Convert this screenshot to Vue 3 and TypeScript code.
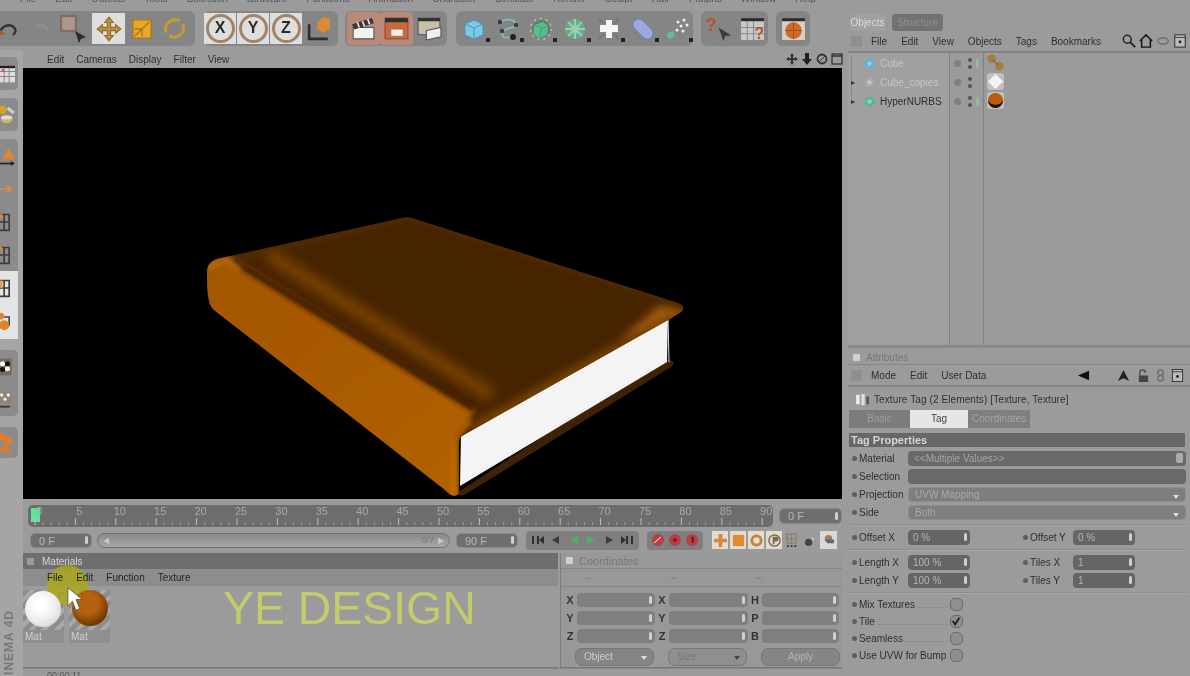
<script setup lang="ts">
const topMenu = ['File', 'Edit', 'Objects', 'Tools', 'Selection', 'Structure', 'Functions', 'Animation', 'Character', 'Simulate', 'Render', 'Sculpt', 'Hair', 'Plugins', 'Window', 'Help'];

const frames = Array.from({ length: 91 }, (_, i) => i);
const frameX = (f: number) => 7 + f * 8.08;

const objects = [
  { name: 'Cube', color: '#5fb4d2', expander: false, dim: true, tick: true },
  { name: 'Cube_copies', color: '#a3a9b0', expander: true, dim: true, tick: false },
  { name: 'HyperNURBS', color: '#58b59a', expander: true, dim: false, tick: true },
];

const coordRows = [
  ['X', 'X', 'H'],
  ['Y', 'Y', 'P'],
  ['Z', 'Z', 'B'],
];

const checks = [
  { label: 'Mix Textures', on: false },
  { label: 'Tile', on: true },
  { label: 'Seamless', on: false },
  { label: 'Use UVW for Bump', on: false },
];
</script>

<template>
  <div class="app">
    <div class="top-menu">
      <span v-for="m in topMenu" :key="m">{{ m }}</span>
    </div>

    <div class="body">
      <div class="left">
        <div class="toolbar">
          <div class="group g1">
            <svg class="ic undo" viewBox="0 0 24 24"><path d="M2 15c2-6 8-8 12-6s5 6 1 9" fill="none" stroke="#333" stroke-width="2.4" /><path d="M1 12l6 5-7 2z" fill="#b5562b" /></svg>
            <svg class="ic redo" viewBox="0 0 24 24"><path d="M20 15c-2-6-8-8-12-6" fill="none" stroke="#8f8f8f" stroke-width="2.4" /></svg>
            <svg class="ic sel" viewBox="0 0 28 28"><rect x="1" y="1" width="15" height="15" fill="#a89a90" stroke="#8a6a5c" stroke-width="2.4" /><path d="M15 16l11 6-5 2-2 4z" fill="#2c2c2c" /></svg>
            <span class="btn on move">
              <svg class="ic" viewBox="0 0 24 24"><path d="M12 1l4 5h-2.500v4.500H18V8l5 4-5 4v-2.500h-4.500V18H16l-4 5-4-5h2.500v-4.500H6V16l-5-4 5-4v2.500h4.500V6H8z" fill="#b8913a" stroke="#8a7030" /></svg>
            </span>
            <svg class="ic scale" viewBox="0 0 24 24"><rect x="2" y="2" width="20" height="20" rx="2" fill="#e8a72b" stroke="#a9781c" stroke-width="1.500" /><path d="M4 20L20 4M4 12h8v8" fill="none" stroke="#a9781c" stroke-width="1.500" /></svg>
            <svg class="ic rotate" viewBox="0 0 24 24"><path d="M4 16a9 9 0 0 1 13-11M20 8a9 9 0 0 1-13 11" fill="none" stroke="#c89a36" stroke-width="3" /></svg>
          </div>
          <div class="group g2">
            <span v-for="a in ['X', 'Y', 'Z']" :key="a" class="btn on axis"><b>{{ a }}</b></span>
            <svg class="ic coord" viewBox="0 0 26 26"><path d="M3 9v14h18" fill="none" stroke="#2e2e2e" stroke-width="2.500" /><path d="M11 7l6-5 6 2v9l-6 4-6-3z" fill="#db8a35" /></svg>
          </div>
          <div class="group g3">
            <span class="btn clap active">
              <svg class="ic" viewBox="0 0 26 26"><path d="M3 12h20v11H3z" fill="#f2f2f2" stroke="#555" /><path d="M2 9l19-6 2 5-19 6z" fill="#3a3a3a" /><path d="M7 7l2 5M12 6l2 5M17 4l2 5" stroke="#eee" stroke-width="1.500" /></svg>
            </span>
            <span class="btn clap active">
              <svg class="ic" viewBox="0 0 26 26"><rect x="2" y="3" width="22" height="20" fill="#c96a3a" stroke="#7a5040" /><rect x="2" y="3" width="22" height="4" fill="#2f2f2f" /><path d="M8 14h11v6H8z" fill="#eee" /></svg>
            </span>
            <span class="btn clap">
              <svg class="ic" viewBox="0 0 26 26"><rect x="2" y="3" width="21" height="16" fill="#c9bfa8" stroke="#555" /><rect x="2" y="3" width="21" height="3" fill="#2f2f2f" /><path d="M10 15l14-3v9l-14 3z" fill="#eee" stroke="#555" /></svg>
            </span>
          </div>
          <div class="group g4">
            <span class="btn prim"><svg class="ic" viewBox="0 0 24 24"><path d="M3 7l9-4 9 4v11l-9 4-9-4z" fill="#7dcae6" stroke="#4a93b5" /><path d="M3 7l9 4 9-4M12 11v11" fill="none" stroke="#4a93b5" /></svg><i /></span>
            <span class="btn prim"><svg class="ic" viewBox="0 0 24 24"><path d="M4 5c6-4 14-3 16 2s-14 3-14 9 6 5 9 4" fill="none" stroke="#8db4bf" stroke-width="2" /><circle cx="4" cy="5" r="2.200" fill="#2f3e42" /><circle cx="20" cy="8" r="2.200" fill="#2f3e42" /><circle cx="6" cy="14" r="2.200" fill="#2f3e42" /><circle cx="17" cy="20" r="3" fill="#222" /></svg><i /></span>
            <span class="btn prim"><svg class="ic" viewBox="0 0 24 24"><circle cx="12" cy="12" r="10.500" fill="none" stroke="#c4c4b4" stroke-dasharray="2 4" stroke-width="1.500" /><circle cx="12" cy="12" r="9" fill="#5f7f6f" /><path d="M5 8l9-3 5 4-1 9-8 3-5-4z" fill="#55c08c" /><path d="M5 8l8 3 6-2M13 11l-3 10" fill="none" stroke="#3f9f70" /></svg><i /></span>
            <span class="btn prim"><svg class="ic" viewBox="0 0 24 24"><circle cx="12" cy="12" r="10" fill="#63ae88" /><circle cx="12" cy="12" r="4" fill="#a9c9b4" /><path d="M12 2v20M2 12h20M5 5l14 14M19 5L5 19" stroke="#9bcdb0" stroke-width="2" /></svg><i /></span>
            <span class="btn prim"><svg class="ic" viewBox="0 0 24 24"><path d="M9 3h6v5h6v7h-6v6H9v-6H3V8h6z" fill="#f4f4f4" /><path d="M2 2l5 5M22 2l-5 5M2 22l5-5M22 22l-5-5" stroke="#5d7f88" stroke-width="2" /></svg><i /></span>
            <span class="btn prim"><svg class="ic" viewBox="0 0 24 24"><rect x="0" y="6" width="24" height="12" rx="6" transform="rotate(45 12 12)" fill="#9aa8e0" stroke="#6a78a8" /></svg><i /></span>
            <span class="btn prim"><svg class="ic" viewBox="0 0 24 24"><path d="M2 16l6-2 2 5-5 3-3-2z" fill="#63bd96" /><g fill="#eee"><circle cx="13" cy="5" r="1.500" /><circle cx="19" cy="3" r="1.500" /><circle cx="16" cy="9" r="1.500" /><circle cx="22" cy="8" r="1.500" /><circle cx="12" cy="13" r="1.500" /><circle cx="18" cy="14" r="1.500" /></g></svg><i /></span>
          </div>
          <div class="group g5">
            <svg class="ic q" viewBox="0 0 28 28"><text x="0" y="17" class="help-mark">?</text><path d="M14 13l13 8-6 1-2 5z" fill="#3c3c3c" /></svg>
            <svg class="ic q" viewBox="0 0 26 26"><rect x="2" y="3" width="22" height="21" fill="#c9c9c9" /><rect x="2" y="3" width="22" height="3" fill="#2b2b2b" /><path d="M2 12h22M2 18h22M8 6v18M14 6v18" stroke="#8a8a8a" /><text x="15" y="23" class="help-mark small">?</text></svg>
          </div>
          <div class="group g6">
            <svg class="ic q" viewBox="0 0 26 26"><rect x="2" y="3" width="22" height="21" fill="#d5d0c8" /><rect x="2" y="3" width="22" height="3" fill="#2b2b2b" /><circle cx="13" cy="15" r="8" fill="#cf6a28" /><path d="M5 15h16M13 7v16" stroke="#a84e18" /></svg>
          </div>
        </div>

        <div class="work">
          <div class="strip">
            <div class="sgroup">
              <span class="sbtn"><svg class="ic" viewBox="0 0 24 24"><rect x="-6" y="2" width="24" height="20" fill="#ddd" /><rect x="-6" y="2" width="24" height="3" fill="#222" /><path d="M-6 9h24M-6 15h24M5 5v17M11 5v17" stroke="#777" /><rect x="2" y="6" width="3" height="3" fill="#d55" /></svg></span>
            </div>
            <div class="sgroup">
              <span class="sbtn"><svg class="ic" viewBox="0 0 24 24"><circle cx="3" cy="6" r="5" fill="#d8a11f" /><path d="M10 2l8 6-3 3-7-6z" fill="#ccc" /><ellipse cx="8" cy="17" rx="7" ry="5" fill="#c9b46a" /><ellipse cx="8" cy="15" rx="7" ry="2.500" fill="#ddd" /></svg></span>
            </div>
            <div class="sgroup long">
              <span class="sbtn"><svg class="ic" viewBox="0 0 24 24"><path d="M3 16L10 2l8 14z" fill="#e0872c" /><path d="M-2 21h17" stroke="#222" stroke-width="2" /><path d="M13 18l5 3-5 3z" fill="#222" /></svg></span>
              <span class="sbtn"><svg class="ic" viewBox="0 0 24 24"><path d="M-2 12h13M8 8l6 4-6 4" fill="none" stroke="#cc8f45" stroke-width="2.500" /></svg></span>
              <span class="sbtn"><svg class="ic" viewBox="0 0 24 24"><path d="M-2 3h13v19H-2zM-2 12h13M5 3v19" fill="none" stroke="#3c3c3c" stroke-width="2" /><circle cx="1" cy="5" r="2.500" fill="#da8a3a" /></svg></span>
              <span class="sbtn"><svg class="ic" viewBox="0 0 24 24"><path d="M-2 3h13v19H-2zM-2 12h13M5 3v19" fill="none" stroke="#3c3c3c" stroke-width="2" /><circle cx="1" cy="4" r="2" fill="#da8a3a" /></svg></span>
              <span class="sbtn lit"><svg class="ic" viewBox="0 0 24 24"><path d="M-2 3h13v19H-2zM-2 12h13M5 3v19" fill="none" stroke="#3c3c3c" stroke-width="2" /><rect x="-2" y="3" width="5" height="9" fill="#e29a4c" /></svg></span>
              <span class="sbtn lit"><svg class="ic" viewBox="0 0 24 24"><path d="M-2 6h13v10H-2z" fill="none" stroke="#444" stroke-width="2" /><circle cx="5" cy="16" r="6" fill="#e0842c" /><circle cx="1" cy="5" r="4" fill="#e0842c" /></svg></span>
            </div>
            <div class="sgroup after-long">
              <span class="sbtn"><svg class="ic" viewBox="0 0 24 24"><rect x="-2" y="2" width="16" height="20" fill="#7a6a58" /><g fill="#fff"><circle cx="3" cy="8" r="3" /><circle cx="9" cy="14" r="3" /></g><g fill="#111"><circle cx="9" cy="8" r="3" /><circle cx="3" cy="15" r="3" /></g></svg></span>
              <span class="sbtn"><svg class="ic" viewBox="0 0 24 24"><rect x="-2" y="2" width="16" height="14" fill="#938373" /><g fill="#eee"><circle cx="2" cy="6" r="2" /><circle cx="10" cy="6" r="2" /><circle cx="6" cy="11" r="2" /></g><path d="M-2 20h14" stroke="#333" stroke-width="2" /></svg></span>
            </div>
            <div class="sgroup after-long">
              <span class="sbtn tall"><svg class="ic" viewBox="0 0 24 30"><g fill="#d97f33"><circle cx="2" cy="8" r="5" /><circle cx="10" cy="12" r="5" /><path d="M6 14l8 12H-2z" /></g></svg></span>
            </div>
            <span class="brand">CINEMA 4D</span>
          </div>

          <div class="main">
            <div class="view-menu">
              <span>Edit</span><span>Cameras</span><span>Display</span><span>Filter</span><span>View</span>
              <div class="view-icons">
                <svg class="mini" viewBox="0 0 12 12"><path d="M6 0l2 3H7v2h2V4l3 2-3 2V7H7v2h1l-2 3-2-3h1V7H3v1L0 6l3-2v1h2V3H4z" fill="#333" /></svg>
                <svg class="mini" viewBox="0 0 12 12"><path d="M4 0h4v6h3l-5 6-5-6h3z" fill="#222" /></svg>
                <svg class="mini" viewBox="0 0 12 12"><circle cx="6" cy="6" r="4.500" fill="none" stroke="#333" stroke-width="1.800" /><path d="M3 9l6-6" stroke="#333" /></svg>
                <svg class="mini" viewBox="0 0 12 12"><rect x="1" y="1" width="10" height="10" fill="none" stroke="#333" stroke-width="1.300" /><path d="M1 3h10" stroke="#333" stroke-width="1.500" /></svg>
              </div>
            </div>

            <div class="viewport">
              <svg class="book" viewBox="23 68 819 431">
                <defs>
                  <filter id="edge" x="-20%" y="-20%" width="140%" height="140%"><feGaussianBlur stdDeviation="2.500" /></filter>
                  <filter id="soft" x="-20%" y="-20%" width="140%" height="140%"><feGaussianBlur stdDeviation="4" /></filter>
                  <filter id="softer" x="-20%" y="-20%" width="140%" height="140%"><feGaussianBlur stdDeviation="6" /></filter>
                  <clipPath id="bookClip"><path d="M207 272c0-8 6-13 14-14L402 218c4-1 8-1 13 1L678 303c6 2 7 6 3 9L668 320 462 436c-2 2-3 4-3 8V492c0 3-4 5-8 3-2-1-4-3-6-5L214 310c-5-5-7-12-7-38z" /></clipPath>
                  <linearGradient id="spine" x1="0" y1="0" x2="1" y2="1">
                    <stop offset="0" stop-color="#a35701" />
                    <stop offset="0.5" stop-color="#a85a00" />
                    <stop offset="1" stop-color="#b46200" />
                  </linearGradient>
                </defs>
                <path d="M662 358l10 3c3 2 1 4-1 6L466 494c-3 2-7 2-9-1z" fill="#3d2208" />
                <path d="M668 316L667 362 460 486 461 436z" fill="#f4f4f4" />
                <path d="M668 316l1 46" stroke="#d8d8d8" />
                <g clip-path="url(#bookClip)">
                  <rect x="190" y="200" width="510" height="305" fill="#472401" />
                  <path d="M660 305L690 312 660 330 620 340z" fill="#a05a0d" filter="url(#soft)" />
                  <path d="M676 316L470 430" stroke="#7d4506" stroke-width="9" fill="none" filter="url(#soft)" />
                  <path d="M240 258L410 217 680 304" stroke="#573004" stroke-width="3" fill="none" filter="url(#edge)" />
                  <path d="M268 254L492 396" stroke="#7a4305" stroke-width="13" fill="none" filter="url(#softer)" />
                  <path d="M198 262L232 256 476 410 456 436 460 502 436 500 196 322z" fill="url(#spine)" filter="url(#edge)" />
                  <path d="M232 260L474 409" stroke="#341900" stroke-width="6" fill="none" filter="url(#edge)" />
                  <path d="M207 268L225 259 240 270" stroke="#bb6a12" stroke-width="5" fill="none" filter="url(#edge)" />
                  <path d="M453 497L456 438 470 420" stroke="#c57207" stroke-width="4" fill="none" filter="url(#edge)" />
                </g>
              </svg>
            </div>

            <svg class="ruler" viewBox="0 0 745 22">
              <rect x="0" y="0" width="745" height="22" rx="5" fill="#6d6d6d" />
              <rect x="3" y="3" width="9" height="14" fill="#5fe39c" />
              <g v-for="f in frames" :key="f">
                <line :x1="frameX(f)" :x2="frameX(f)" :y1="f % 5 === 0 ? 13 : 17" y2="20" :stroke="f % 5 === 0 ? '#bdbdbd' : '#9d9d9d'" />
                <text v-if="f % 5 === 0" :x="frameX(f) + 4" y="10" text-anchor="middle" class="ruler-label">{{ f }}</text>
              </g>
            </svg>
            <div class="ruler-end"><span class="field end-field">0 F<i class="spin" /></span></div>

            <div class="playback">
              <span class="field frame-field">0 F<i class="spin" /></span>
              <div class="slider">
                <span class="slider-arrow">◀</span>
                <span class="slider-count">0/7</span>
                <span class="slider-arrow">▶</span>
              </div>
              <span class="field frame-field">90 F<i class="spin" /></span>
              <div class="pgroup transport">
                <svg viewBox="0 0 12 10"><path d="M0 1h2v8H0zM12 1v8L7 5v4H5V1h2v4z" fill="#2f2f2f" /></svg>
                <svg viewBox="0 0 12 10"><path d="M9 1v8L2 5z" fill="#3c3c3c" /></svg>
                <svg viewBox="0 0 12 10"><path d="M10 1v8L2 5z" fill="#49b45f" /></svg>
                <svg viewBox="0 0 12 10"><path d="M2 1v8l8-4z" fill="#49b45f" /></svg>
                <svg viewBox="0 0 12 10"><path d="M3 1v8l7-4z" fill="#3c3c3c" /></svg>
                <svg viewBox="0 0 12 10"><path d="M12 1h-2v8h2zM0 1v8l5-4v4h2V1H5v4z" fill="#2f2f2f" /></svg>
              </div>
              <div class="pgroup record">
                <svg viewBox="0 0 14 14"><circle cx="7" cy="7" r="6" fill="#b83f45" /><path d="M3 10l7-6" stroke="#eee" /></svg>
                <svg viewBox="0 0 14 14"><circle cx="7" cy="7" r="6" fill="#b83f45" /><circle cx="7" cy="7" r="2" fill="#7a2024" /></svg>
                <svg viewBox="0 0 14 14"><circle cx="7" cy="7" r="6" fill="#b83f45" /><path d="M6 4h3v6H7z" fill="#6f2024" /></svg>
              </div>
              <div class="keys">
                <span class="key"><svg viewBox="0 0 14 14"><path d="M5 0h4v5h5v4H9v5H5V9H0V5h5z" fill="#cc8a3a" /></svg></span>
                <span class="key"><svg viewBox="0 0 14 14"><rect x="1" y="1" width="12" height="12" fill="#e08a33" /></svg></span>
                <span class="key"><svg viewBox="0 0 14 14"><circle cx="7" cy="7" r="5" fill="none" stroke="#c18436" stroke-width="3" /></svg></span>
                <span class="key"><svg viewBox="0 0 14 14"><circle cx="7" cy="7" r="6" fill="none" stroke="#7a6a50" stroke-width="1.500" /><path d="M5 3h4a2 2 0 0 1 0 5H7v3H5z" fill="#7a6a50" /></svg></span>
                <svg class="plain" viewBox="0 0 14 16"><path d="M1 1h10v10H1zM1 6h10M6 1v10" fill="none" stroke="#8a7a60" stroke-dasharray="2 1" stroke-width="1.500" /><path d="M1 14h12" stroke="#333" stroke-dasharray="2 2" stroke-width="2" /></svg>
                <svg class="plain" viewBox="0 0 14 14"><circle cx="6" cy="9" r="4" fill="#444" /><path d="M8 2l5 4-3 2z" fill="#bbb" /></svg>
                <span class="key last"><svg viewBox="0 0 14 14"><circle cx="7" cy="5" r="4" fill="#9d8060" /><path d="M3 6h10v4H6z" fill="#666" /></svg></span>
              </div>
            </div>

            <div class="panels">
              <section class="materials">
                <div class="mat-title"><i class="sq" />Materials</div>
                <div class="mat-menu">
                  <span>File</span><span>Edit</span><span>Function</span><span>Texture</span>
                </div>
                <div class="mat-content">
                  <div class="mat">
                    <span class="ball white" />
                    <span class="mat-name">Mat</span>
                  </div>
                  <div class="mat">
                    <span class="ball brown" />
                    <span class="mat-name">Mat</span>
                  </div>
                  <span class="watermark">YE DESIGN</span>
                </div>
                <span class="cursor-halo" />
                <svg class="cursor" viewBox="0 0 20 28"><path d="M1 1v20l5-5 4 10 4-2-4-10h7z" fill="#fff" stroke="#444" stroke-width="0.800" /></svg>
              </section>

              <section class="coords">
                <div class="coord-title"><i class="sq light" />Coordinates</div>
                <div class="coord-menu"><span>–</span><span>–</span><span>–</span></div>
                <div class="coord-grid">
                  <template v-for="row in coordRows" :key="row[2]">
                    <template v-for="(label, i) in row" :key="label + i">
                      <b class="coord-label">{{ label }}</b>
                      <span class="cfield"><i class="spin" /></span>
                    </template>
                  </template>
                </div>
                <div class="coord-actions">
                  <span class="pill light">Object<i class="caret" /></span>
                  <span class="pill dim">Size<i class="caret dark" /></span>
                  <span class="pill apply">Apply</span>
                </div>
              </section>
            </div>
            <div class="status">00:00:11</div>
          </div>
        </div>
      </div>

      <aside class="right">
        <div class="tabs">
          <span class="tab-on">Objects</span><span class="tab-off">Structure</span>
        </div>
        <div class="r-menu">
          <i class="grip" />
          <span>File</span><span>Edit</span><span>View</span><span>Objects</span><span>Tags</span><span>Bookmarks</span>
          <div class="r-icons">
            <svg viewBox="0 0 16 16"><circle cx="6" cy="6" r="4.500" fill="none" stroke="#222" stroke-width="1.700" /><path d="M9 9l6 6" stroke="#222" stroke-width="2.200" /></svg>
            <svg viewBox="0 0 16 16"><path d="M1 8l7-7 7 7M3 7v8h10V7" fill="none" stroke="#111" stroke-width="1.700" /></svg>
            <svg viewBox="0 0 16 16"><ellipse cx="8" cy="8" rx="6" ry="3.500" fill="none" stroke="#666" stroke-width="1.300" /></svg>
            <svg viewBox="0 0 16 16"><rect x="2" y="1" width="12" height="14" fill="#bbb" stroke="#333" stroke-width="1.200" /><path d="M2 4h12" stroke="#333" /><circle cx="8" cy="9" r="1.600" fill="#222" /></svg>
          </div>
        </div>
        <div class="tree">
          <div class="tree-names">
            <div v-for="o in objects" :key="o.name" class="tree-row">
              <span class="expander" :class="{ blank: !o.expander }">▸</span>
              <svg class="obj-ic" viewBox="0 0 12 12"><circle cx="6" cy="6" r="5.500" :fill="o.color" /><path d="M3 6l3-3 3 3-3 3z" fill="#dbe8e8" opacity="0.500" /></svg>
              <span class="obj-name" :class="{ dim: o.dim }">{{ o.name }}</span>
            </div>
          </div>
          <div class="tree-flags">
            <div v-for="o in objects" :key="o.name" class="flag-row">
              <i class="flag-dot" />
              <span class="flag-pair"><i /><i /></span>
              <em v-if="o.tick" class="flag-tick" />
            </div>
          </div>
          <div class="tree-tags">
            <svg viewBox="0 0 18 18"><circle cx="5" cy="5" r="4.500" fill="#a87d3a" /><circle cx="13" cy="13" r="4.500" fill="#a87d3a" /><path d="M6 6l6 6" stroke="#555" /></svg>
            <span class="tag-box"><svg viewBox="0 0 18 18"><path d="M9 1l8 8-8 8-8-8z" fill="#f4f4f4" /></svg></span>
            <span class="tag-box"><svg viewBox="0 0 18 18"><circle cx="9" cy="9" r="8" fill="#b85e0c" /><path d="M1 9a8 8 0 0 0 16 0c-3 6-13 6-16 0z" fill="#1f1408" /></svg></span>
          </div>
        </div>

        <div class="attr-title"><i class="sq light" />Attributes</div>
        <div class="r-menu attr-menu">
          <i class="grip" />
          <span>Mode</span><span>Edit</span><span>User Data</span>
          <div class="attr-icons">
            <svg class="back" viewBox="0 0 14 14"><path d="M13 2v10L1 7z" fill="#111" /></svg>
            <svg class="up" viewBox="0 0 14 14"><path d="M7 1l6 12-6-3-6 3z" fill="#222" /></svg>
            <svg viewBox="0 0 14 14"><path d="M3 7V4a3 3 0 0 1 6 0" fill="none" stroke="#444" stroke-width="1.400" /><rect x="2" y="7" width="10" height="7" fill="#444" /></svg>
            <svg viewBox="0 0 14 14"><circle cx="7" cy="4" r="3" fill="none" stroke="#666" stroke-width="1.300" /><circle cx="7" cy="10" r="3" fill="none" stroke="#666" stroke-width="1.300" /></svg>
            <svg viewBox="0 0 14 14"><rect x="1.500" y="0.500" width="11" height="13" fill="#bbb" stroke="#333" /><path d="M1.500 3h11" stroke="#333" /><circle cx="7" cy="8" r="1.500" fill="#222" /></svg>
          </div>
        </div>
        <div class="tag-head">
          <svg viewBox="0 0 16 14"><rect x="0" y="1" width="4" height="11" fill="#eee" /><rect x="6" y="0" width="4" height="13" fill="#ddd" /><rect x="12" y="3" width="3" height="9" fill="#555" /></svg>
          <span>Texture Tag (2 Elements) [Texture, Texture]</span>
        </div>
        <div class="attr-tabs">
          <span class="a-basic">Basic</span><span class="a-tag">Tag</span><span class="a-coord">Coordinates</span>
        </div>
        <div class="section-bar">Tag Properties</div>

        <div class="props">
          <div class="prop"><label><i />Material</label><span class="pfield dark">&lt;&lt;Multiple Values&gt;&gt;<i class="spin big" /></span></div>
          <div class="prop"><label><i />Selection</label><span class="pfield dark" /></div>
          <div class="prop"><label><i />Projection</label><span class="pfield drop">UVW Mapping<i class="caret" /></span></div>
          <div class="prop"><label><i />Side</label><span class="pfield drop">Both<i class="caret" /></span></div>
        </div>
        <hr class="sep first" />
        <div class="pair-row">
          <div class="prop half"><label><i />Offset X</label><span class="nfield">0 %<i class="spin" /></span></div>
          <div class="prop half second"><label><i />Offset Y</label><span class="nfield">0 %<i class="spin" /></span></div>
        </div>
        <hr class="sep" />
        <div class="pair-row">
          <div class="prop half"><label><i />Length X</label><span class="nfield">100 %<i class="spin" /></span></div>
          <div class="prop half second"><label><i />Tiles X</label><span class="nfield">1<i class="spin" /></span></div>
        </div>
        <div class="pair-row">
          <div class="prop half"><label><i />Length Y</label><span class="nfield">100 %<i class="spin" /></span></div>
          <div class="prop half second"><label><i />Tiles Y</label><span class="nfield">1<i class="spin" /></span></div>
        </div>
        <hr class="sep" />
        <div class="checks">
          <div v-for="c in checks" :key="c.label" class="check">
            <label><i /><span>{{ c.label }}</span><em /></label>
            <span class="box">
              <svg v-if="c.on" viewBox="0 0 12 12"><path d="M2 6l3 4 5-8" fill="none" stroke="#222" stroke-width="2.200" /></svg>
            </span>
          </div>
        </div>
      </aside>
    </div>
  </div>
</template>

<style scoped>
.app {
  width: 1190px;
  height: 676px;
  overflow: hidden;
  background: #9b9b9b;
  color: #2e2e2e;
  font-family: "Liberation Sans", Arial, sans-serif;
  font-size: 10px;
  filter: blur(0.55px);
}
i, em { font-style: normal; display: block; }

.top-menu {
  height: 3px;
  overflow: hidden;
  display: flex;
  gap: 19px;
  padding-left: 20px;
  line-height: 3px;
  color: #555;
}
.top-menu span { margin-top: -3px; }

.body { display: flex; height: 673px; }
.left { width: 848px; flex: none; }
.right { width: 342px; flex: none; padding-top: 11px; }

.toolbar { display: flex; height: 35px; margin-top: 8px; }
.group {
  height: 35px;
  background: #858585;
  border-radius: 0 6px 6px 0;
  display: flex;
  align-items: center;
  flex: none;
}
.group + .group { border-radius: 6px; }
.ic { display: block; flex: none; }
.g1 { width: 195px; }
.g1 .undo { width: 24px; height: 24px; margin-left: -2px; }
.g1 .redo { width: 22px; height: 22px; margin-left: 8px; }
.g1 .sel { width: 28px; height: 28px; margin-left: 8px; }
.btn { display: flex; align-items: center; justify-content: center; flex: none; position: relative; }
.btn.on { background: #dedede; height: 31px; }
.move { width: 33px; margin-left: 4px; }
.move .ic { width: 26px; height: 26px; }
.scale { width: 22px; height: 22px; margin-left: 6px; }
.rotate { width: 25px; height: 25px; margin-left: 9px; }
.g2 { width: 134px; margin-left: 9px; }
.axis { width: 32px; margin-right: 1px; }
.axis b {
  width: 29px;
  height: 29px;
  border: 3px solid #a08468;
  border-radius: 50%;
  box-sizing: border-box;
  text-align: center;
  line-height: 22px;
  font-size: 16px;
  color: #2b2b2b;
}
.coord { width: 27px; height: 27px; margin-left: 3px; }
.g3 { width: 102px; margin-left: 7px; padding-left: 2px; box-sizing: border-box; }
.clap { width: 33px; height: 33px; }
.clap .ic { width: 27px; height: 27px; }
.clap.active { background: #b98a78; border-radius: 4px; }
.g4 { width: 237px; margin-left: 9px; padding-left: 1px; box-sizing: border-box; }
.prim { width: 33.800px; height: 33px; }
.prim .ic { width: 24px; height: 24px; }
.prim > i {
  position: absolute;
  right: 1px;
  bottom: 3px;
  width: 4px;
  height: 4px;
  background: #222;
}
.g5 { width: 67px; margin-left: 8px; gap: 7px; padding-left: 4px; box-sizing: border-box; }
.g6 { width: 34px; margin-left: 8px; justify-content: center; }
.q { width: 27px; height: 27px; }
.help-mark { font: bold 20px "Liberation Sans", Arial, sans-serif; fill: #b9512f; }
.help-mark.small { font-size: 15px; }

.work { display: flex; margin-top: 4px; }
.strip {
  width: 23px;
  flex: none;
  height: 626px;
  background: #a5a5a5;
  position: relative;
  padding-top: 7px;
  box-sizing: border-box;
}
.sgroup {
  width: 18px;
  background: #8b8b8b;
  border-radius: 0 5px 5px 0;
  margin-bottom: 8px;
}
.sgroup.after-long { margin-top: 11px; }
.sbtn { display: flex; align-items: center; height: 33px; }
.sbtn .ic { width: 20px; height: 24px; overflow: visible; }
.sbtn.lit { background: #e4e4e4; height: 34px; }
.sbtn.tall { height: 31px; }
.sbtn.tall .ic { height: 30px; }
.brand {
  position: absolute;
  left: 2px;
  bottom: -9px;
  writing-mode: vertical-rl;
  transform: rotate(180deg);
  font-size: 12px;
  font-weight: bold;
  letter-spacing: 1px;
  color: #777;
}

.main { width: 819px; flex: none; position: relative; }
.view-menu { height: 18px; display: flex; align-items: center; padding-left: 24px; gap: 12px; }
.view-icons { margin-left: auto; margin-right: -1px; display: flex; gap: 3px; }
.mini { width: 12px; height: 12px; display: block; }
.viewport { height: 431px; background: #000; }
.book { display: block; width: 819px; height: 431px; }

.ruler { display: block; width: 745px; height: 22px; margin: 6px 0 0 5px; }
.ruler-label { font: 11px "Liberation Sans", Arial, sans-serif; fill: #a8a8a8; }
.ruler-end { position: absolute; right: 0; top: 458px; width: 63px; }

.field {
  display: block;
  position: relative;
  background: #6f6f6f;
  border: 1px solid #8a8a8a;
  border-radius: 5px;
  color: #b5b5b5;
  box-sizing: border-box;
  font-size: 11px;
  line-height: 14px;
  padding-left: 8px;
}
.end-field { height: 16px; }
.frame-field { width: 62px; height: 15px; flex: none; }
.spin {
  position: absolute;
  right: 3px;
  top: 50%;
  width: 3px;
  height: 8px;
  margin-top: -4px;
  border-radius: 2px;
  background: #cfcfcf;
}
.spin.big { width: 7px; height: 10px; margin-top: -5px; background: #aaa; }

.playback { display: flex; align-items: center; height: 20px; margin-top: 3px; padding-left: 7px; }
.slider {
  width: 353px;
  height: 15px;
  margin: 0 6px 0 5px;
  flex: none;
  border-radius: 8px;
  border: 1px solid #6f6f6f;
  box-sizing: border-box;
  background: linear-gradient(#8a8a8a, #a6a6a6);
  display: flex;
  align-items: center;
  padding: 0 5px;
  color: #c8c8c8;
  font-size: 9px;
}
.slider-count { margin-left: auto; margin-right: 4px; color: #777; }
.slider-arrow { font-size: 8px; }
.pgroup {
  display: flex;
  align-items: center;
  height: 19px;
  background: #7f7f7f;
  border-radius: 4px;
  margin-left: 8px;
  flex: none;
  box-sizing: border-box;
}
.transport { width: 113px; justify-content: space-around; padding: 0 3px; }
.transport svg { width: 12px; height: 10px; }
.record { width: 56px; justify-content: space-around; padding: 0 3px; }
.record svg { width: 14px; height: 14px; }
.keys { display: flex; align-items: center; margin-left: 9px; gap: 2px; flex: none; }
.key { width: 16px; height: 18px; background: #e0dccf; display: flex; align-items: center; justify-content: center; }
.key svg { width: 13px; height: 13px; }
.plain { width: 13px; height: 15px; margin-left: 2px; }
.key.last { width: 17px; margin-left: 2px; background: #d8d8d8; }

.panels { display: flex; margin-top: 3px; height: 115px; gap: 2px; }
.materials { width: 535px; flex: none; position: relative; border-bottom: 1px solid #777; box-sizing: border-box; }
.mat-title {
  height: 16px;
  background: #6e6e6e;
  color: #d8d8d8;
  display: flex;
  align-items: center;
  gap: 8px;
  padding-left: 4px;
}
.sq { width: 7px; height: 7px; background: #9a9a9a; }
.sq.light { background: #cfcfcf; }
.mat-menu {
  height: 17px;
  background: #8d8d8d;
  display: flex;
  align-items: center;
  padding-left: 24px;
  gap: 13px;
  color: #222;
  position: relative;
}
.mat-menu span { position: relative; z-index: 1; }
.mat-content { display: flex; gap: 5px; padding-top: 4px; position: relative; }
.mat {
  width: 41px;
  height: 53px;
  background: repeating-linear-gradient(135deg, #8d8d8d 0 5px, #a9a9a9 5px 9px);
  position: relative;
}
.mat-name {
  position: absolute;
  left: 0;
  right: 0;
  bottom: 0;
  height: 13px;
  background: #8f8f8f;
  color: #d0d0d0;
  padding-left: 2px;
  line-height: 13px;
}
.ball { position: absolute; left: 2px; top: 1px; width: 36px; height: 36px; border-radius: 50%; z-index: 1; }
.ball.white { background: radial-gradient(circle at 42% 38%, #fff 0 15%, #eee 50%, #c9c9c9 100%); }
.ball.brown { left: 3px; top: 0; background: radial-gradient(circle at 42% 36%, #b5610f 0 35%, #7a3e06 68%, #120800 100%); }
.watermark {
  position: absolute;
  left: 200px;
  top: 0;
  font-size: 46.400px;
  line-height: 44px;
  color: #c3cb6b;
  white-space: nowrap;
}
.cursor-halo {
  position: absolute;
  left: 24px;
  top: 12px;
  width: 41px;
  height: 41px;
  border-radius: 50%;
  background: rgba(170, 170, 20, 0.8);
}
.cursor { position: absolute; left: 44px; top: 33px; width: 18px; height: 27px; z-index: 2; }

.coords { flex: 1; background: #989898; border-left: 1px solid #7d7d7d; border-bottom: 1px solid #777; box-sizing: border-box; }
.coord-title {
  height: 16px;
  color: #777;
  font-size: 11px;
  display: flex;
  align-items: center;
  gap: 6px;
  padding-left: 5px;
  border-bottom: 1px solid #868686;
  box-sizing: border-box;
}
.coord-menu {
  height: 18px;
  display: flex;
  gap: 80px;
  padding-left: 24px;
  align-items: center;
  color: #7a7a7a;
  border-bottom: 1px solid #868686;
  box-sizing: border-box;
}
.coord-grid {
  display: grid;
  grid-template-columns: 12px 78px 12px 79px 12px 77px;
  gap: 4px 1px;
  padding: 6px 0 0 3px;
}
.coord-label { font-size: 11px; line-height: 14px; color: #333; text-align: center; }
.cfield { height: 14px; background: #7f7f7f; border-radius: 4px; position: relative; display: block; }
.coord-actions { display: flex; gap: 14px; padding: 5px 0 0 14px; }
.pill {
  width: 79px;
  height: 18px;
  box-sizing: border-box;
  border-radius: 7px;
  background: #858585;
  border: 1px solid #777;
  color: #ccc;
  line-height: 16px;
  padding-left: 8px;
  position: relative;
  font-size: 10px;
}
.pill.dim { color: #777; background: #8f8f8f; }
.pill.apply { text-align: center; padding-left: 0; color: #b5b5b5; }
.caret {
  position: absolute;
  right: 6px;
  top: 7px;
  border: 3px solid transparent;
  border-top: 4px solid #ddd;
  border-bottom: 0;
}
.caret.dark { border-top-color: #444; }
.status { height: 8px; overflow: hidden; border-top: 1px solid #888; padding-left: 24px; line-height: 12px; color: #555; font-size: 9px; }

.tabs { display: flex; height: 17px; gap: 7px; padding-left: 2px; color: #dedede; align-items: stretch; font-size: 10px; }
.tab-on { width: 35px; background: #a0a0a0; line-height: 17px; text-align: center; }
.tab-off { width: 51px; background: #727272; color: #8f8f8f; line-height: 17px; text-align: center; border-radius: 3px; }

.r-menu {
  height: 19px;
  margin-top: 1px;
  display: flex;
  align-items: center;
  gap: 14px;
  position: relative;
  padding-left: 3px;
  border-bottom: 2px solid #848484;
}
.grip { width: 11px; height: 11px; background: #8f8f8f; margin-right: -5px; }
.r-icons { position: absolute; left: 274px; top: 2px; display: flex; gap: 3px; }
.r-icons svg { width: 14px; height: 14px; display: block; }

.tree { display: flex; height: 295px; border-bottom: 3px solid #8a8a8a; box-sizing: border-box; }
.tree-names {
  width: 102px;
  background: linear-gradient(#8a8a8a, #8a8a8a) 3px 2px / 1px 44px no-repeat, #a0a0a0;
  flex: none;
  border-right: 1px solid #808080;
  padding-top: 1px;
  box-sizing: border-box;
}
.tree-row { height: 19px; display: flex; align-items: center; padding-left: 3px; margin-bottom: 0; }
.expander { width: 13px; color: #333; font-size: 8px; }
.expander.blank { color: transparent; }
.obj-ic { width: 11px; height: 11px; margin-right: 5px; }
.obj-name { color: #2d2d2d; white-space: nowrap; }
.obj-name.dim { color: #c6c6c6; }
.tree-flags { width: 34px; flex: none; padding-top: 1px; border-right: 1px solid #808080; box-sizing: border-box; }
.flag-row { height: 19px; display: flex; align-items: center; padding-left: 4px; gap: 7px; }
.flag-dot { width: 7px; height: 7px; border-radius: 50%; background: #808080; }
.flag-pair i { width: 4px; height: 4px; border-radius: 50%; background: #555; margin: 3px 0; }
.flag-tick { width: 3px; height: 9px; background: #93b8a0; margin-left: -3px; }
.tree-tags { flex: 1; padding: 1px 0 0 3px; }
.tree-tags svg { width: 17px; height: 17px; display: block; }
.tree-tags > svg { margin-bottom: 2px; }
.tag-box { display: block; width: 17px; height: 17px; margin-bottom: 2px; border-radius: 3px; background: #c0c0c0; }

.attr-title {
  height: 14px;
  margin-top: 2px;
  display: flex;
  align-items: center;
  gap: 6px;
  padding-left: 5px;
  color: #777;
  border-bottom: 1px solid #868686;
}
.attr-icons { position: absolute; left: 229px; top: 3px; display: flex; }
.attr-icons svg { width: 13px; height: 13px; margin-right: 4px; display: block; }
.attr-icons .back { margin-right: 27px; }
.attr-icons .up { margin-right: 7px; }

.tag-head { height: 21px; margin-top: 2px; display: flex; align-items: center; padding-left: 8px; gap: 4px; color: #303030; letter-spacing: 0.1px; }
.tag-head svg { width: 14px; height: 12px; }
.attr-tabs { display: flex; height: 18px; padding-left: 1px; }
.attr-tabs span { line-height: 18px; text-align: center; }
.a-basic { width: 61px; background: #7c7c7c; color: #9d9d9d; }
.a-tag { width: 58px; background: #e6e6e6; color: #444; }
.a-coord { width: 62px; background: #7f7f7f; color: #a5a5a5; }
.section-bar {
  height: 14px;
  margin: 5px 5px 0 1px;
  background: #676767;
  color: #d6d6d6;
  font-weight: bold;
  font-size: 11px;
  line-height: 14px;
  padding-left: 2px;
}

.props { padding: 2px 4px 0 0; }
.prop { display: flex; align-items: center; height: 18px; }
.prop label, .check label { display: flex; align-items: center; width: 60px; flex: none; color: #2e2e2e; white-space: nowrap; }
.prop label i, .check label i { width: 5px; height: 5px; border-radius: 50%; background: #5e5e5e; margin: 0 2px 0 4px; flex: none; }
.pfield {
  flex: 1;
  height: 15px;
  border-radius: 4px;
  position: relative;
  padding-left: 6px;
  line-height: 15px;
  box-sizing: border-box;
}
.pfield.dark { background: #696969; color: #a5a5a5; }
.pfield.drop { background: #7e7e7e; color: #a9a9a9; border: 1px solid #8d8d8d; line-height: 13px; }
.sep { height: 0; border: 0; border-top: 1px solid #8b8b8b; border-bottom: 1px solid #a8a8a8; margin: 3px 3px 2px 1px; }
.sep.first { margin-top: 3px; margin-bottom: 2px; }
.pair-row { display: flex; }
.half { width: 171px; }
.half.second { width: 171px; }
.half.second label { width: 54px; }
.nfield {
  width: 62px;
  height: 15px;
  background: #656565;
  border-radius: 4px;
  color: #b5b5b5;
  position: relative;
  line-height: 15px;
  padding-left: 5px;
  box-sizing: border-box;
  font-size: 10px;
}
.check { display: flex; align-items: center; height: 17px; }
.check label { width: 102px; overflow: hidden; }
.check label span { flex: none; }
.check label em { flex: 1; border-bottom: 1px dotted #868686; margin: 5px 2px 0 3px; min-width: 0; }
.box {
  width: 13px;
  height: 13px;
  border: 1.500px solid #6a6a6a;
  border-radius: 5px;
  background: #8f8f8f;
  box-sizing: border-box;
  display: block;
}
.box svg { display: block; width: 10px; height: 10px; }
</style>
